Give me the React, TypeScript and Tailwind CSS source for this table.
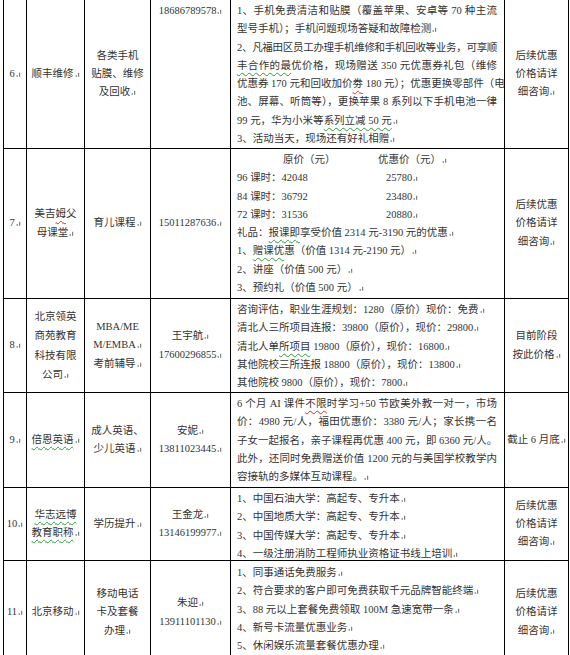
import React from "react";

// Word paragraph mark, drawn tiny as in the screenshot
const M = () => (
  <svg width="5" height="7" viewBox="0 0 5 7" className="inline-block ml-[1px] align-baseline">
    <circle cx="1.2" cy="6.1" r="0.75" fill="#555" />
    <path d="M3.7 2.8V6.8" stroke="#555" strokeWidth="0.9" />
  </svg>
);

// spell-check squiggles
const G = ({ children }: { children: React.ReactNode }) => (
  <span className="underline decoration-wavy decoration-[#2f9a3a] decoration-1 underline-offset-[3px]">{children}</span>
);
const R = ({ children }: { children: React.ReactNode }) => (
  <span className="underline decoration-wavy decoration-[#e0281e] decoration-1 underline-offset-[3px]">{children}</span>
);

const Full = ({ children, className = "" }: { children: React.ReactNode; className?: string }) => (
  <div className={`whitespace-nowrap [text-align-last:justify] ${className}`}>{children}</div>
);
const Line = ({ children, className = "" }: { children: React.ReactNode; className?: string }) => (
  <div className={`whitespace-nowrap ${className}`}>{children}</div>
);

interface RowProps {
  h: string;
  num: string;
  name: React.ReactNode;
  cat: React.ReactNode;
  phone: React.ReactNode;
  content: React.ReactNode;
  note: React.ReactNode;
  phoneTop?: boolean;
}

const centerCell = "border-r border-black flex flex-col items-center justify-center text-center leading-[18.3px]";

const Row = ({ h, num, name, cat, phone, content, note, phoneTop }: RowProps) => (
  <div className={`grid grid-cols-[23px_58px_66px_80px_274px_64px] border-b border-black ${h}`}>
    <div className={centerCell}>
      <div className="whitespace-nowrap">
        {num}
        <M />
      </div>
    </div>
    <div className={centerCell}>{name}</div>
    <div className={centerCell}>{cat}</div>
    <div
      className={
        phoneTop
          ? "border-r border-black flex flex-col items-center justify-start pt-[2px] text-center leading-[18.3px]"
          : centerCell
      }
    >
      {phone}
    </div>
    <div className="border-r border-black pl-[6px] pr-[7px] pt-[2px] leading-[18.3px] overflow-hidden">{content}</div>
    <div className={centerCell}>{note}</div>
  </div>
);

const Later = () => (
  <>
    <div>后续优惠</div>
    <div>价格请详</div>
    <div>
      细咨询
      <M />
    </div>
  </>
);

export default function App() {
  return (
    <div className="w-[570px] h-[655px] overflow-hidden bg-white">
      <div
        className="ml-[3px] w-[566px] border-l border-black text-[10.5px] text-[#333]"
        style={{ fontFamily: '"Liberation Serif", "Noto Sans CJK SC", serif' }}
      >
        <Row
          h="h-[149px]"
          num="6"
          phoneTop
          name={
            <div className="whitespace-nowrap">
              顺丰维修
              <M />
            </div>
          }
          cat={
            <>
              <div>各类手机</div>
              <div>贴膜、维修</div>
              <div>
                及回收
                <M />
              </div>
            </>
          }
          phone={
            <div>
              18686789578
              <M />
            </div>
          }
          content={
            <>
              <Full>1、手机免费清洁和贴膜（覆盖苹果、安卓等 70 种主流</Full>
              <Line>
                型号手机）；手机问题现场答疑和故障检测
                <M />
              </Line>
              <Full className="tracking-[-0.35px]">2、凡福田区员工办理手机维修和手机回收等业务，可享顺</Full>
              <Full>
                <G>丰合作的最</G>优价格，现场赠送 350 元优惠券礼包（维修
              </Full>
              <Full>
                优惠券 170 元和回收加价<R>劵</R> 180 元）；优惠更换零部件（电
              </Full>
              <Full>池、屏幕、听筒等），更换苹果 8 系列以下手机电池一律</Full>
              <Line>
                99 元，华为小米等<G>系列立减 50 元</G>
                <M />
              </Line>
              <Line>
                3、活动当天，现场还有好礼相赠
                <M />
              </Line>
            </>
          }
          note={<Later />}
        />

        <Row
          h="h-[150px]"
          num="7"
          name={
            <>
              <div>
                美吉<R>姆</R>父
              </div>
              <div>
                母课堂
                <M />
              </div>
            </>
          }
          cat={
            <div className="whitespace-nowrap">
              育儿课程
              <M />
            </div>
          }
          phone={
            <div>
              15011287636
              <M />
            </div>
          }
          content={
            <>
              <Line className="pl-[46px]">
                <span className="inline-block w-[95px]">原价（元）</span>优惠价（元）
                <M />
              </Line>
              <Line>
                <span className="inline-block w-[149px]">96 课时：42048</span>25780
                <M />
              </Line>
              <Line>
                <span className="inline-block w-[149px]">84 课时：36792</span>23480
                <M />
              </Line>
              <Line>
                <span className="inline-block w-[149px]">72 课时：31536</span>20880
                <M />
              </Line>
              <Line>
                礼品：<G>报课即</G>享受价值 2314 元-3190 元的优惠
                <M />
              </Line>
              <Line>
                1、<G>赠课优</G>惠（价值 1314 元-2190 元）
                <M />
              </Line>
              <Line>
                2、讲座（价值 500 元）
                <M />
              </Line>
              <Line>
                3、预约礼（价值 500 元）
                <M />
              </Line>
            </>
          }
          note={<Later />}
        />

        <Row
          h="h-[94px]"
          num="8"
          name={
            <div className="leading-[19.5px]">
              <div>北京领英</div>
              <div>商苑教育</div>
              <div>科技有限</div>
              <div>
                公司
                <M />
              </div>
            </div>
          }
          cat={
            <>
              <div>MBA/ME</div>
              <div>
                M/EMBA
                <M />
              </div>
              <div>
                考前辅导
                <M />
              </div>
            </>
          }
          phone={
            <>
              <div>
                王宇航
                <M />
              </div>
              <div>
                17600296855
                <M />
              </div>
            </>
          }
          content={
            <>
              <Line>
                咨询评估，职业生涯规划：1280（原价）现价：免费
                <M />
              </Line>
              <Line>
                清北人三所项目连报：39800（原价），现价：29800
                <M />
              </Line>
              <Line>
                清北人单<G>所项目</G> 19800（原价），现价：16800
                <M />
              </Line>
              <Line>
                其他院校三所连报 18800（原价），现价：13800
                <M />
              </Line>
              <Line>
                其他院校 9800（原价），现价：7800
                <M />
              </Line>
            </>
          }
          note={
            <>
              <div>目前阶段</div>
              <div>
                按此价格
                <M />
              </div>
            </>
          }
        />

        <Row
          h="h-[95px]"
          num="9"
          name={
            <div className="whitespace-nowrap">
              <G>倍恩英语</G>
              <M />
            </div>
          }
          cat={
            <>
              <div>成人英语、</div>
              <div>
                少儿英语
                <M />
              </div>
            </>
          }
          phone={
            <>
              <div>
                安妮
                <M />
              </div>
              <div>
                13811023445
                <M />
              </div>
            </>
          }
          content={
            <>
              <Full>
                6 个月 AI 课件<R>不限</R>时学习+50 节欧美外教一对一，市场
              </Full>
              <Full>价：4980 元/人，福田优惠价：3380 元/人；家长携一名</Full>
              <Full>子女一起报名，亲子课程再优惠 400 元，即 6360 元/人。</Full>
              <Full>此外，还同时免费赠送价值 1200 元的与美国学校教学内</Full>
              <Line>
                容接轨的多媒体互动课程。
                <M />
              </Line>
            </>
          }
          note={
            <div className="whitespace-nowrap">
              截止 6 月底
              <M />
            </div>
          }
        />

        <Row
          h="h-[73px]"
          num="10"
          name={
            <>
              <div>
                <G>华志远博</G>
              </div>
              <div>
                <G>教育职称</G>
                <M />
              </div>
            </>
          }
          cat={
            <div className="whitespace-nowrap">
              学历提升
              <M />
            </div>
          }
          phone={
            <>
              <div>
                王金龙
                <M />
              </div>
              <div>
                13146199977
                <M />
              </div>
            </>
          }
          content={
            <>
              <Line>
                1、中国石油大学：高起专、专升本
                <M />
              </Line>
              <Line>
                2、中国地质大学：高起专、专升本
                <M />
              </Line>
              <Line>
                3、中国传媒大学：高起专、专升本
                <M />
              </Line>
              <Line>
                4、一级注册消防工程师执业资格证书线上培训
                <M />
              </Line>
            </>
          }
          note={<Later />}
        />

        <Row
          h="h-[104px]"
          num="11"
          name={
            <div className="whitespace-nowrap">
              北京移动
              <M />
            </div>
          }
          cat={
            <>
              <div>移动电话</div>
              <div>卡及套餐</div>
              <div>
                办理
                <M />
              </div>
            </>
          }
          phone={
            <>
              <div>
                朱迎
                <M />
              </div>
              <div>
                13911101130
                <M />
              </div>
            </>
          }
          content={
            <div className="pt-[1px]">
              <Line>
                1、同事通话免费服务
                <M />
              </Line>
              <Line>
                2、符合要求的客户即可免费获取千元品牌智能终端
                <M />
              </Line>
              <Line>
                3、88 元以上套餐免费领取 100M 急速宽带一条
                <M />
              </Line>
              <Line>
                4、新号卡流量优惠业务
                <M />
              </Line>
              <Line>
                5、休闲娱乐流量套餐优惠办理
                <M />
              </Line>
            </div>
          }
          note={<Later />}
        />
      </div>
    </div>
  );
}
